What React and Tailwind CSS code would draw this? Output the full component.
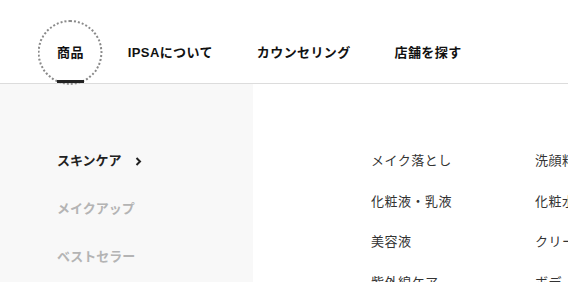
import { Fragment } from "react";

const navItems = ["商品", "IPSAについて", "カウンセリング", "店舗を探す"];
const categories = ["スキンケア", "メイクアップ", "ベストセラー"];
const products = [
  ["メイク落とし", "洗顔料"],
  ["化粧液・乳液", "化粧水"],
  ["美容液", "クリーム"],
  ["紫外線ケア", "ボディケア"],
];

export default function App() {
  return (
    <div className="w-[568px] h-[282px] overflow-hidden bg-white font-['Liberation_Sans','Noto_Sans_CJK_JP',sans-serif]">
      {/* ヘッダーナビ */}
      <header className="h-[84px] border-b border-[#dcdcdc]">
        <nav className="flex gap-[44px] pl-[57px] h-full">
          {navItems.map((item, i) => (
            <div
              key={item}
              className="relative h-full flex items-center pt-[22px] text-[13px] font-bold text-[#111] leading-5 tracking-[0.03em] whitespace-nowrap"
            >
              {i === 0 && (
                <>
                  <span className="absolute left-1/2 -translate-x-1/2 top-[20px] w-[65px] h-[65px] rounded-full border-2 border-dotted border-[#8a8a8a]" />
                  <span className="absolute left-0 right-0 bottom-0 h-[3px] bg-[#222]" />
                </>
              )}
              <span className="relative">{item}</span>
            </div>
          ))}
        </nav>
      </header>

      <div className="flex h-[198px]">
        {/* カテゴリー */}
        <aside className="w-[253px] shrink-0 bg-[#f8f8f8] pl-[57px] pt-[67px]">
          <ul className="flex flex-col gap-[28px] whitespace-nowrap">
            {categories.map((c, i) => (
              <li
                key={c}
                className={
                  i === 0
                    ? "flex items-center text-[13px] leading-5 font-bold text-[#222]"
                    : "flex items-center text-[13px] leading-5 font-bold text-[#b4b4b4]"
                }
              >
                {c}
                {i === 0 && (
                  <svg width="7" height="9" viewBox="0 0 7 9" className="ml-[13px]">
                    <polyline points="1.5,1 5,4.5 1.5,8" fill="none" stroke="#222" strokeWidth="2" />
                  </svg>
                )}
              </li>
            ))}
          </ul>
        </aside>

        {/* 商品一覧 */}
        <div className="flex-1 pl-[118px] pt-[67px]">
          <div className="grid grid-cols-[164px_164px] gap-y-[20.5px] text-[13px] leading-5 text-[#333] tracking-[0.04em] whitespace-nowrap">
            {products.map(([a, b]) => (
              <Fragment key={a}>
                <span>{a}</span>
                <span>{b}</span>
              </Fragment>
            ))}
          </div>
        </div>
      </div>
    </div>
  );
}
